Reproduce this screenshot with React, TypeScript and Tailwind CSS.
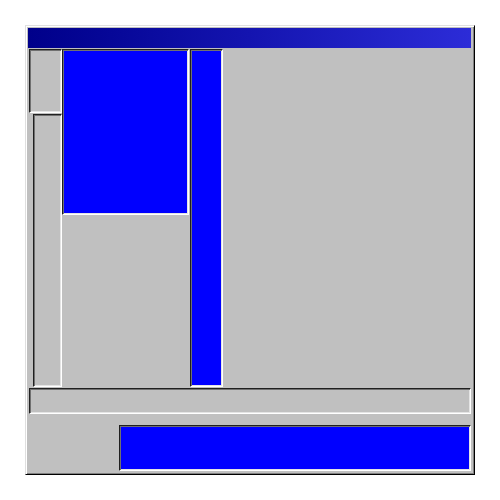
export default function App() {
  const sunken =
    "border border-t-[#202020] border-l-[#202020] border-r-white border-b-white shadow-[inset_1px_1px_0_#707070,inset_-1px_-1px_0_#e4e4e4]";

  return (
    <div className="w-[500px] h-[500px] bg-white p-[25px]">
      <div className="w-[450px] h-[450px] bg-[#c0c0c0] border border-t-[#dfdfdf] border-l-[#dfdfdf] border-r-black border-b-black shadow-[inset_1px_1px_0_#ffffff,inset_-1px_-1px_0_#808080] p-[2px] flex flex-col">
        {/* title bar */}
        <div className="h-[20px] mr-[1px] shrink-0 bg-linear-to-r from-[#00008a] via-[#1414b0] to-[#2c2cd8]" />

        {/* main split area */}
        <div className="mt-[1px] h-[338px] shrink-0 flex pl-[1px]">
          <div className="w-[33px] flex flex-col">
            <div className={`h-[64px] ${sunken}`} />
            <div className={`mt-[1px] ml-[4px] flex-1 ${sunken}`} />
          </div>
          <div className="w-[128px] flex flex-col">
            <div className={`h-[166px] w-[127px] bg-[#0000ff] ${sunken}`} />
            <div className="flex-1" />
          </div>
          <div className={`w-[33px] bg-[#0000ff] ${sunken}`} />
          <div className="flex-1" />
        </div>

        {/* status bar */}
        <div className={`mt-[1px] ml-[1px] mr-[1px] h-[26px] shrink-0 ${sunken}`} />

        {/* bottom area */}
        <div className="flex-1 pt-[11px] pl-[91px] pr-[1px] pb-[1px] flex">
          <div className={`flex-1 bg-[#0000ff] ${sunken}`} />
        </div>
      </div>
    </div>
  );
}
